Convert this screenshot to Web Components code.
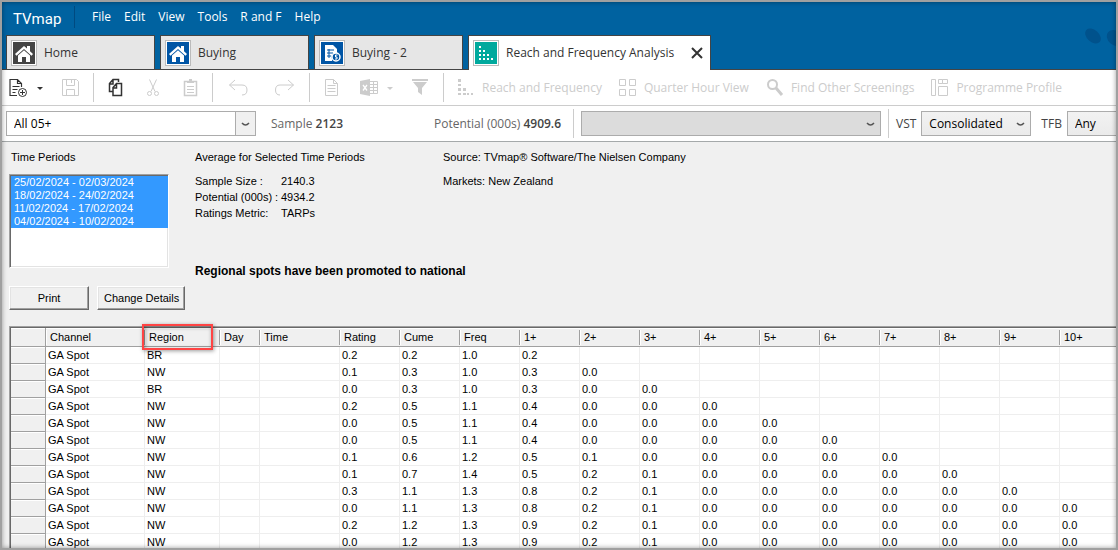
<!DOCTYPE html>
<html lang="en">
<head>
<meta charset="utf-8">
<title>TVmap</title>
<style>
  body {
    margin: 0;
    font-family: "Open Sans", "Noto Sans", sans-serif;
    font-size: 12px;
    color: #333;
  }
</style>
</head>
<body>
<tv-app></tv-app>

<script>
const ICONS = {
  home: `<path d="M2 12 11 4l3 2.600V4h3v5.200L20 12l-1.500 1.700L11 7l-7.500 6.700z" fill="#fff"/><path d="M5 13.500 11 8.300l6 5.200V20h-4v-5H9v5H5z" fill="#fff"/>`,
  buying: `<path d="M4 3h8l4 4v4h-2a4 4 0 0 0-3 6v2H4z" fill="#fff"/><path d="M6 8h7M6 11h6M6 14h4" stroke="#0055a5" stroke-width="1"/><path d="M8 7v9" stroke="#0055a5"/><circle cx="15" cy="15" r="4" fill="#0055a5" stroke="#fff" stroke-width="1.500"/><path d="M16.500 13h-2v2h1.500v2h-2" stroke="#fff" fill="none"/>`,
  dots: `<path d="M4 4h2v2H4zM4 8h2v2H4zM8 8h2v2H8zM4 12h2v2H4zM8 12h2v2H8zM12 12h2v2h-2zM4 16h2v2H4zM8 16h2v2H8zM12 16h2v2h-2zM16 16h2v2h-2z" fill="#fff"/>`,
  newDoc: `<path d="M8 17.500H1v-16h7.500l4 4V9M8.500 1.500v4h4M3.500 8.500h7M3.500 11.500h5M3.500 14.500h3" stroke-width="1.200"/><circle cx="13.500" cy="14.500" r="4"/><path d="M13.500 12v5M11 14.500h5"/>`,
  save: `<path d="M1.500 1.500h14l2 2v14h-16zM5.500 1.500v6h8v-6M10.500 2v3M5.500 17.500v-6h8v6"/>`,
  copy: `<path d="M7 13.500H3.500v-8l3.500-4h5.500V4M3.500 6H7V1.500M10.500 5.500 7 9.500v8h8.500v-12zM7 10h3.500V5.500" stroke-width="1.500"/>`,
  cut: `<path d="M6.500 1.500l5.500 12M13.500 1.500l-5.500 12"/><circle cx="6.500" cy="15.500" r="2"/><circle cx="13.500" cy="15.500" r="2"/>`,
  paste: `<path d="M4.500 3.500h12v14h-12z" stroke-width="1.500"/><path d="M7 5h7V3h-2V1H9v2H7z" fill="currentColor" stroke="none"/><path d="M7 8.500h7M7 11.500h7M7 14.500h7"/>`,
  undo: `<path d="M7 2 1.500 7 7 12M1.500 7H14q5 0 5 5t-5 5"/>`,
  redo: `<path d="M14 2l5.500 5L14 12M19.500 7H6q-4.500 0-4.500 5T6 17"/>`,
  doc: `<path d="M3.500 1.500h8l4 4v12h-12zM11.500 1.500v4h4M5.500 7.500h8M5.500 10.500h8M5.500 13.500h8"/>`,
  excel: `<path d="M1 3l10-2v17L1 16z" fill="currentColor" stroke="none"/><path d="M11 3.500h7.500v12H11M11 6.500h7M11 9.500h7M11 12.500h7M14.500 4v11"/><path d="M4 7l4 5.500M8 7l-4 5.500" stroke="#fff" stroke-width="1.300"/>`,
  filter: `<path d="M1 1h16v2H1zM2 4h14l-5 6v7l-4-3v-4z" fill="currentColor" stroke="none"/>`,
  reach: `<path d="M2 1h3v3H2zM2 6h3v2H2zM2 10h3v3H2zM7 10h3v3H7zM2 15h3v2H2zM7 15h3v2H7zM11 15h2v2h-2zM15 15h2v2h-2z" fill="currentColor" stroke="none"/>`,
  quarter: `<path d="M1.500 1.500h6v6h-6zM11.500 1.500h6v6h-6zM1.500 11.500h6v6h-6zM11.500 11.500h6v6h-6z"/>`,
  find: `<circle cx="7.500" cy="6.500" r="4.500" stroke-width="2"/><path d="M11 10l6 7" stroke-width="3"/>`,
  profile: `<path d="M1.500 1.500h4v16h-4zM8.500 1.500h4v4h-4zM12.500 1.500h5v4h-5zM8.500 8.500h9v9h-9z"/>`
};

const MENU = ["File", "Edit", "View", "Tools", "R and F", "Help"];

const PERIODS = [
  "25/02/2024 - 02/03/2024",
  "18/02/2024 - 24/02/2024",
  "11/02/2024 - 17/02/2024",
  "04/02/2024 - 10/02/2024"
];

const COLUMNS = ["Channel", "Region", "Day", "Time", "Rating", "Cume", "Freq",
  "1+", "2+", "3+", "4+", "5+", "6+", "7+", "8+", "9+", "10+"];

// region, then rating, cume, freq and the 1+..10+ reach values
const SPOTS = [
  "BR 0.2 0.2 1.0 0.2",
  "NW 0.1 0.3 1.0 0.3 0.0",
  "BR 0.0 0.3 1.0 0.3 0.0 0.0",
  "NW 0.2 0.5 1.1 0.4 0.0 0.0 0.0",
  "NW 0.0 0.5 1.1 0.4 0.0 0.0 0.0 0.0",
  "NW 0.0 0.5 1.1 0.4 0.0 0.0 0.0 0.0 0.0",
  "NW 0.1 0.6 1.2 0.5 0.1 0.0 0.0 0.0 0.0 0.0",
  "NW 0.1 0.7 1.4 0.5 0.2 0.1 0.0 0.0 0.0 0.0 0.0",
  "NW 0.3 1.1 1.3 0.8 0.2 0.1 0.0 0.0 0.0 0.0 0.0 0.0",
  "NW 0.0 1.1 1.3 0.8 0.2 0.1 0.0 0.0 0.0 0.0 0.0 0.0 0.0",
  "NW 0.2 1.2 1.3 0.9 0.2 0.1 0.0 0.0 0.0 0.0 0.0 0.0 0.0",
  "NW 0.0 1.2 1.3 0.9 0.2 0.1 0.0 0.0 0.0 0.0 0.0 0.0 0.0"
];

class TvElement extends HTMLElement {
  constructor() {
    super();
    this.attachShadow({ mode: "open" });
  }

  connectedCallback() {
    this.shadowRoot.innerHTML = `<style>${this.constructor.styles}</style>${this.render()}`;
  }
}

class TvMenu extends TvElement {
  static get styles() {
    return /* css */`
      :host {
        display: flex;
        align-items: center;
        height: 33px;
        padding-left: 11px;
        color: #fff;
      }

      .logo {
        width: 61px;
        font: 15px/24px Roboto, sans-serif;
      }

      nav {
        display: flex;
        gap: 13px;
        padding-left: 17px;
        border-left: 1px solid #004a80;
        line-height: 22px;
        margin-bottom: 4px;
      }

      button {
        padding: 0;
        border: 0;
        background: none;
        color: inherit;
        font: inherit;
      }
    `;
  }

  render() {
    return /* html */`
      <span class="logo">TVmap</span>
      <nav>${MENU.map(name => `<button>${name}</button>`).join("")}</nav>`;
  }
}

class TvTab extends TvElement {
  static get styles() {
    return /* css */`
      :host {
        display: flex;
        align-items: center;
        box-sizing: border-box;
        width: 149px;
        height: 34px;
        padding: 0 7px 0 4px;
        border: 1px solid #444;
        border-bottom: 0;
        background: #e6e6e6;
      }

      :host([active]) {
        width: 243px;
        height: 35px;
        padding-bottom: 1px;
        background: #fff;
      }

      svg {
        flex: none;
        width: 22px;
        height: 22px;
        padding: 1px;
        border: 1px solid #bbb;
        box-shadow: inset 0 0 0 1px #fff;
        background: var(--tile) content-box;
      }

      button {
        padding: 0;
        border: 0;
        background: none;
        color: inherit;
        font: inherit;
      }

      .name {
        flex: 1;
        padding-left: 7px;
        text-align: left;
        white-space: nowrap;
      }

      .close svg {
        display: block;
        width: 12px;
        height: 12px;
        padding: 0;
        border: 0;
        box-shadow: none;
        background: none;
      }
    `;
  }

  render() {
    const close = this.hasAttribute("active")
      ? `<button class="close" aria-label="Close"><svg viewBox="0 0 12 12"><path d="M1 1l10 10M11 1 1 11" stroke="#333" stroke-width="2"/></svg></button>`
      : "";
    return /* html */`
      <svg viewBox="0 0 22 22">${ICONS[this.getAttribute("icon")]}</svg>
      <button class="name"><slot></slot></button>${close}`;
  }
}

class TvTool extends TvElement {
  static get styles() {
    return /* css */`
      :host {
        display: flex;
        gap: 7px;
        color: #ccc;
      }

      :host([on]) {
        color: #333;
      }

      button {
        display: flex;
        align-items: center;
        gap: 6px;
        padding: 0;
        border: 0;
        background: none;
        color: inherit;
        font: inherit;
        white-space: nowrap;
      }

      svg {
        flex: none;
        width: var(--icon-width, 20px);
        height: 20px;
      }

      .drop svg {
        width: 8px;
      }
    `;
  }

  render() {
    const drop = this.hasAttribute("drop")
      ? `<button class="drop" aria-label="More"><svg viewBox="0 0 8 20"><path d="M1 9h6l-3 3z" fill="currentColor"/></svg></button>`
      : "";
    return /* html */`
      <button aria-label="${this.textContent || this.getAttribute("icon")}">
        <svg viewBox="0 0 20 20" fill="none" stroke="currentColor">${ICONS[this.getAttribute("icon")]}</svg>
        <slot></slot>
      </button>${drop}`;
  }
}

class TvToolbar extends TvElement {
  static get styles() {
    return /* css */`
      :host {
        display: flex;
        align-items: center;
        gap: 12px;
        height: 35px;
        padding-left: 7px;
        border-bottom: 1px solid #ccc;
        background: #fff;
      }

      .group {
        display: flex;
        gap: 17px;
      }

      .wide {
        --icon-width: 26px;
        gap: 20px;
      }

      .views {
        gap: 16px;
      }

      i {
        width: 1px;
        height: 29px;
        background: #ccc;
      }
    `;
  }

  render() {
    return /* html */`
      <div class="group"><tv-tool icon="newDoc" on drop></tv-tool><tv-tool icon="save"></tv-tool></div>
      <i></i>
      <div class="group"><tv-tool icon="copy" on></tv-tool><tv-tool icon="cut"></tv-tool><tv-tool icon="paste"></tv-tool></div>
      <i></i>
      <div class="group wide"><tv-tool icon="undo"></tv-tool><tv-tool icon="redo"></tv-tool></div>
      <i></i>
      <div class="group"><tv-tool icon="doc"></tv-tool><tv-tool icon="excel" drop></tv-tool><tv-tool icon="filter"></tv-tool></div>
      <i></i>
      <div class="group views">
        <tv-tool icon="reach">Reach and Frequency</tv-tool>
        <tv-tool icon="quarter">Quarter Hour View</tv-tool>
        <tv-tool icon="find">Find Other Screenings</tv-tool>
        <tv-tool icon="profile">Programme Profile</tv-tool>
      </div>`;
  }
}

class TvCombo extends TvElement {
  static get styles() {
    return /* css */`
      :host {
        display: flex;
        flex: none;
        align-items: center;
        gap: 5px;
      }

      .box {
        position: relative;
        width: var(--combo-width);
      }

      select {
        appearance: none;
        display: block;
        box-sizing: border-box;
        width: 100%;
        height: 25px;
        padding: 0 24px 0 7px;
        border: 1px solid #acacac;
        border-radius: 0;
        background: var(--combo-fill, linear-gradient(#f2f2f2, #ebebeb));
        color: #000;
        font: inherit;
      }

      /* the arrow lies over the right end of the select */
      svg {
        position: absolute;
        top: 1px;
        right: 1px;
        width: 19px;
        height: 23px;
        pointer-events: none;
      }

      :host([editable]) select {
        background: #fff;
      }

      :host([editable]) svg {
        border-left: 1px solid #acacac;
        background: #f0f0f0;
      }
    `;
  }

  render() {
    const label = this.getAttribute("label");
    const hidden = this.hasAttribute("quiet");
    return /* html */`
      ${hidden ? "" : `<label for="list">${label}</label>`}
      <div class="box">
        <select id="list" ${hidden ? `aria-label="${label}"` : ""}><option>${this.getAttribute("value") || ""}</option></select>
        <svg viewBox="0 0 19 23"><path d="M6 11q3.500 4 7 0" fill="none" stroke="#555" stroke-width="1.500"/></svg>
      </div>`;
  }
}

class TvFilters extends TvElement {
  static get styles() {
    return /* css */`
      :host {
        display: flex;
        align-items: center;
        height: 35px;
        padding-left: 4px;
        border-bottom: 1px solid #a5a9aa;
        background: #fff;
        color: #444;
        overflow: hidden;
      }

      .audience { --combo-width: 250px; }
      .daypart { --combo-width: 300px; --combo-fill: #dcdcdc; }
      .short { --combo-width: 110px; margin-right: 10px; }

      p {
        flex: none;
        margin: 0;
        color: #666;
        white-space: nowrap;
      }

      .sample {
        padding-left: 15px;
      }

      .potential {
        box-sizing: border-box;
        width: 230px;
        text-align: right;
      }

      .sample { width: 60px; }

      b {
        font-weight: 600;
        color: #444;
      }

      i {
        flex: none;
        width: 1px;
        height: 29px;
        margin: 0 7px;
        background: #ccc;
      }

      .potential + i { margin-left: 12px; }
    `;
  }

  render() {
    return /* html */`
      <tv-combo class="audience" label="Audience" value="All 05+" quiet editable></tv-combo>
      <p class="sample">Sample <b>2123</b></p>
      <p class="potential">Potential (000s) <b>4909.6</b></p>
      <i></i>
      <tv-combo class="daypart" label="Daypart" quiet></tv-combo>
      <i></i>
      <tv-combo class="short" label="VST" value="Consolidated"></tv-combo>
      <tv-combo class="short" label="TFB" value="Any"></tv-combo>`;
  }
}

class TvSummary extends TvElement {
  static get styles() {
    return /* css */`
      :host {
        display: grid;
        grid-template-columns: 176px 238px 1fr;
        column-gap: 10px;
        padding: 7px 7px 16px;
        font: 11px/16px "Liberation Sans", Arial, sans-serif;
        color: #000;
      }

      .periods { grid-row: span 2; }

      label {
        display: block;
        padding-left: 2px;
        margin-bottom: 9px;
      }

      select {
        display: block;
        box-sizing: border-box;
        width: 160px;
        height: 94px;
        padding: 1px 0 0 1px;
        border: 1px solid;
        border-color: #a0a0a0 #fff #fff #a0a0a0;
        border-radius: 0;
        box-shadow: inset 1px 1px #696969, inset -1px -1px #e3e3e3;
        background: #fff;
        font: inherit;
        overflow: hidden;
      }

      option {
        min-height: 0;
        height: 13px;
        padding: 0 3px;
        line-height: 13px;
      }

      option:checked {
        background: linear-gradient(#39f, #39f);
        color: #fff;
        -webkit-text-fill-color: #fff;
      }

      .actions {
        display: flex;
        gap: 8px;
        margin-top: 18px;
      }

      button {
        box-sizing: border-box;
        height: 24px;
        min-width: 80px;
        padding: 0 6px;
        border: 1px solid;
        border-color: #fff #696969 #696969 #fff;
        box-shadow: inset -1px -1px #a0a0a0, inset 1px 1px #e3e3e3;
        background: #f0f0f0;
        font: inherit;
        color: inherit;
        white-space: nowrap;
      }

      p, dl, dd { margin: 0; }

      p + dl, p + p { margin-top: 8px; }

      dl {
        display: grid;
        grid-template-columns: 86px 1fr;
        white-space: nowrap;
      }

      .note {
        grid-column: 2 / 4;
        align-self: end;
        margin-bottom: 31px;
        font-size: 12px;
        font-weight: bold;
      }
    `;
  }

  render() {
    return /* html */`
      <div class="periods">
        <label for="periods">Time Periods</label>
        <select id="periods" multiple>${PERIODS.map(text => `<option selected>${text}</option>`).join("")}</select>
        <div class="actions"><button>Print</button><button>Change Details</button></div>
      </div>
      <div>
        <p>Average for Selected Time Periods</p>
        <dl>
          <dt>Sample Size :</dt><dd>2140.3</dd>
          <dt>Potential (000s) :</dt><dd>4934.2</dd>
          <dt>Ratings Metric:</dt><dd>TARPs</dd>
        </dl>
      </div>
      <div>
        <p>Source: TVmap® Software/The Nielsen Company</p>
        <p>Markets: New Zealand</p>
      </div>
      <p class="note">Regional spots have been promoted to national</p>`;
  }
}

class TvSpots extends TvElement {
  static get styles() {
    return /* css */`
      :host {
        display: block;
        margin-left: 7px;
        border: 1px solid #a0a0a0;
        border-width: 1px 0 0 1px;
        box-shadow: inset 1px 1px #696969;
        padding: 1px 0 0 1px;
        font: 11px/15px "Liberation Sans", Arial, sans-serif;
        color: #000;
      }

      table {
        table-layout: fixed;
        width: 1109px;
        border-collapse: separate;
        border-spacing: 0;
        background: #fff;
      }

      col { width: 60px; }
      .stub { width: 35px; }
      .channel { width: 99px; }
      .region { width: 75px; }
      .day { width: 40px; }
      .time { width: 80px; }

      th, td {
        box-sizing: border-box;
        padding: 1px 0 0 2px;
        height: 17px;
        border-right: 1px solid #eee;
        border-bottom: 1px solid #eee;
        font-weight: normal;
        text-align: left;
      }

      th {
        border-color: #a0a0a0;
        background: #f0f0f0;
        box-shadow: inset 0 1px #fff;
      }

      thead th {
        position: relative;
        height: 19px;
        padding: 0 0 0 4px;
      }

      /* short divider between headings */
      thead th:not(:first-child) {
        border-right: 0;
        background:
          linear-gradient(#a0a0a0, #a0a0a0) right 2px / 1px 15px no-repeat,
          linear-gradient(#fff, #fff) left 2px / 1px 15px no-repeat,
          #f0f0f0;
      }

      /* marker round the Region heading */
      .marked::after {
        content: "";
        position: absolute;
        top: -4px;
        left: -3px;
        width: 67px;
        height: 22px;
        border: 2px solid #f44;
        box-shadow: 1px 1px 4px #0006, inset 1px 1px 4px #0006;
      }
    `;
  }

  render() {
    const heads = COLUMNS.map(name =>
      `<th scope="col"${name === "Region" ? ` class="marked"` : ""}>${name}</th>`).join("");
    const rows = SPOTS.map(line => {
      const [region, ...values] = line.split(" ");
      const cells = ["GA Spot", region, "", "", ...values];
      return `<tr><th></th>${COLUMNS.map((_, i) => `<td>${cells[i] || ""}</td>`).join("")}</tr>`;
    }).join("");

    return /* html */`
      <table>
        <colgroup>
          <col class="stub"><col class="channel"><col class="region"><col class="day"><col class="time"><col span="13">
        </colgroup>
        <thead><tr><th></th>${heads}</tr></thead>
        <tbody>${rows}</tbody>
      </table>`;
  }
}

class TvApp extends TvElement {
  static get styles() {
    return /* css */`
      :host {
        display: block;
        position: relative;
        box-sizing: border-box;
        height: 100vh;
        border: 2px solid #a0a0a0;
        background: #f0f0f0;
        overflow: hidden;
      }

      /* soft inner edge of the window */
      :host::after {
        content: "";
        position: absolute;
        inset: 0;
        box-shadow: inset 0 0 5px #0006;
        pointer-events: none;
      }

      header {
        position: relative;
        background: #0062a0;
      }

      .swoosh {
        position: absolute;
        top: 22px;
        right: 0;
        width: 32px;
        height: 24px;
      }

      .tabs {
        display: flex;
        gap: 5px;
        height: 34px;
        padding-left: 4px;
        border-bottom: 1px solid #444;
      }
    `;
  }

  render() {
    return /* html */`
      <header>
        <tv-menu></tv-menu>
        <svg class="swoosh" viewBox="0 0 32 24" fill="#00528c">
          <ellipse cx="9" cy="12" rx="9" ry="6" transform="rotate(42 9 12)"/>
          <ellipse cx="31" cy="14" rx="9" ry="7" transform="rotate(42 31 14)"/>
        </svg>
        <div class="tabs">
          <tv-tab icon="home" style="--tile: #444">Home</tv-tab>
          <tv-tab icon="home" style="--tile: #0055a5">Buying</tv-tab>
          <tv-tab icon="buying" style="--tile: #0055a5">Buying - 2</tv-tab>
          <tv-tab icon="dots" style="--tile: #00a99d" active>Reach and Frequency Analysis</tv-tab>
        </div>
      </header>
      <tv-toolbar></tv-toolbar>
      <tv-filters></tv-filters>
      <tv-summary></tv-summary>
      <tv-spots></tv-spots>`;
  }
}

customElements.define("tv-menu", TvMenu);
customElements.define("tv-tab", TvTab);
customElements.define("tv-tool", TvTool);
customElements.define("tv-toolbar", TvToolbar);
customElements.define("tv-combo", TvCombo);
customElements.define("tv-filters", TvFilters);
customElements.define("tv-summary", TvSummary);
customElements.define("tv-spots", TvSpots);
customElements.define("tv-app", TvApp);
</script>
</body>
</html>
